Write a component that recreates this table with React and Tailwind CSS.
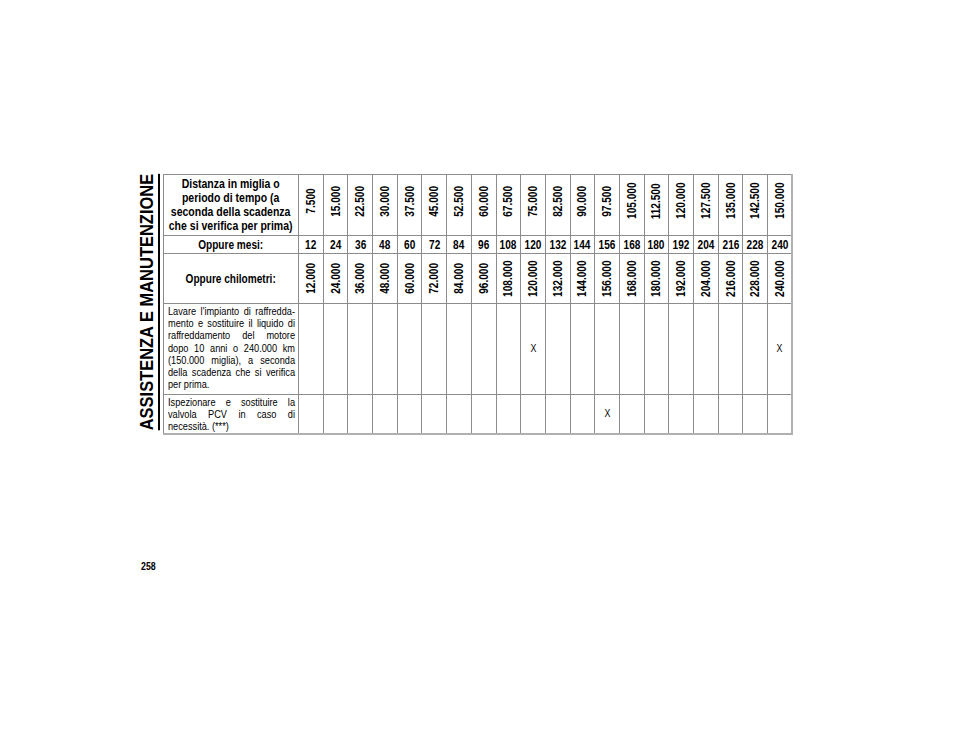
import React from "react";

const miles = ["7.500","15.000","22.500","30.000","37.500","45.000","52.500","60.000","67.500","75.000","82.500","90.000","97.500","105.000","112.500","120.000","127.500","135.000","142.500","150.000"];
const months = Array.from({ length: 20 }, (_, i) => String((i + 1) * 12));
const km = Array.from({ length: 20 }, (_, i) => `${(i + 1) * 12}.000`);

const FONT = { fontFamily: "'Liberation Sans',Arial,sans-serif" };

function Vert({ children }) {
  return (
    <span className="inline-block align-middle [writing-mode:vertical-rl] rotate-180 scale-y-[0.84] font-bold text-[12px] leading-none whitespace-nowrap">
      {children}
    </span>
  );
}

function Narrow({ children, className = "" }) {
  return <span className={`inline-block whitespace-nowrap scale-x-[0.84] ${className}`}>{children}</span>;
}

function JLine({ children }) {
  return <div className="whitespace-nowrap text-justify [text-align-last:justify]">{children}</div>;
}

function Body({ children }) {
  return (
    <div className="w-[127px]">
      <div className="w-[145px] origin-left scale-x-[0.876] text-[10.5px] leading-[12.2px]">{children}</div>
    </div>
  );
}

export default function App() {
  const cell = "border border-[#8c8c8c] p-0 text-center align-middle";
  return (
    <div className="w-[960px] h-[742px] bg-white text-black flex" style={FONT}>
      <div className="w-[163px] pl-[138px] pt-[172px] flex flex-col shrink-0">
        <div className="h-[261px] w-[19px] flex items-center justify-center">
          <span className="shrink-0 [writing-mode:vertical-rl] rotate-180 scale-y-[0.89] font-bold text-[18.5px] leading-none underline decoration-2 underline-offset-[2px] whitespace-nowrap">
            ASSISTENZA E MANUTENZIONE
          </span>
        </div>
        <div className="mt-[128px] pl-[3px] text-[10.5px] font-bold leading-none">
          <span className="inline-block origin-left scale-x-[0.84]">258</span>
        </div>
      </div>
      <div className="pt-[174px]">
        <table className="border-collapse table-fixed w-[629px] border-r-2 border-b-2 border-r-[#b0b0b0] border-b-[#b0b0b0]">
          <colgroup>
            <col className="w-[135px]" />
            {miles.map((m) => (
              <col key={m} className="w-[24.7px]" />
            ))}
          </colgroup>
          <tbody>
            <tr className="h-[61px]">
              <td className={`${cell} font-bold text-[12.5px] leading-[14.2px]`}>
                <div className="flex justify-center">
                  <div className="shrink-0 whitespace-nowrap text-center scale-x-[0.84]">
                    Distanza in miglia o<br />periodo di tempo (a<br />seconda della scadenza<br />che si verifica per prima)
                  </div>
                </div>
              </td>
              {miles.map((m) => (
                <td key={m} className={`${cell} pb-[8px] leading-none`}>
                  <Vert>{m}</Vert>
                </td>
              ))}
            </tr>
            <tr className="h-[18px]">
              <td className={`${cell} font-bold text-[12px] leading-none`}>
                <Narrow>Oppure mesi:</Narrow>
              </td>
              {months.map((m) => (
                <td key={m} className={`${cell} font-bold text-[12px] leading-none`}>
                  <Narrow>{m}</Narrow>
                </td>
              ))}
            </tr>
            <tr className="h-[50px]">
              <td className={`${cell} font-bold text-[12px] leading-none`}>
                <Narrow>Oppure chilometri:</Narrow>
              </td>
              {km.map((m) => (
                <td key={m} className={`${cell} leading-none`}>
                  <Vert>{m}</Vert>
                </td>
              ))}
            </tr>
            <tr className="h-[91px]">
              <td className={`${cell} !text-left align-top px-[4px] pt-[1px]`}>
                <Body>
                  <JLine>Lavare l'impianto di raffredda-</JLine>
                  <JLine>mento e sostituire il liquido di</JLine>
                  <JLine>raffreddamento del motore</JLine>
                  <JLine>dopo 10 anni o 240.000 km</JLine>
                  <JLine>(150.000 miglia), a seconda</JLine>
                  <JLine>della scadenza che si verifica</JLine>
                  <div>per prima.</div>
                </Body>
              </td>
              {miles.map((m, i) => (
                <td key={m} className={`${cell} text-[10.5px]`}>
                  {i === 9 || i === 19 ? <Narrow>X</Narrow> : null}
                </td>
              ))}
            </tr>
            <tr className="h-[38px]">
              <td className={`${cell} !text-left align-top px-[4px] pt-[1px]`}>
                <Body>
                  <JLine>Ispezionare e sostituire la</JLine>
                  <JLine>valvola PCV in caso di</JLine>
                  <div>necessità. (***)</div>
                </Body>
              </td>
              {miles.map((m, i) => (
                <td key={m} className={`${cell} text-[10.5px]`}>
                  {i === 12 ? <Narrow>X</Narrow> : null}
                </td>
              ))}
            </tr>
          </tbody>
        </table>
      </div>
    </div>
  );
}
